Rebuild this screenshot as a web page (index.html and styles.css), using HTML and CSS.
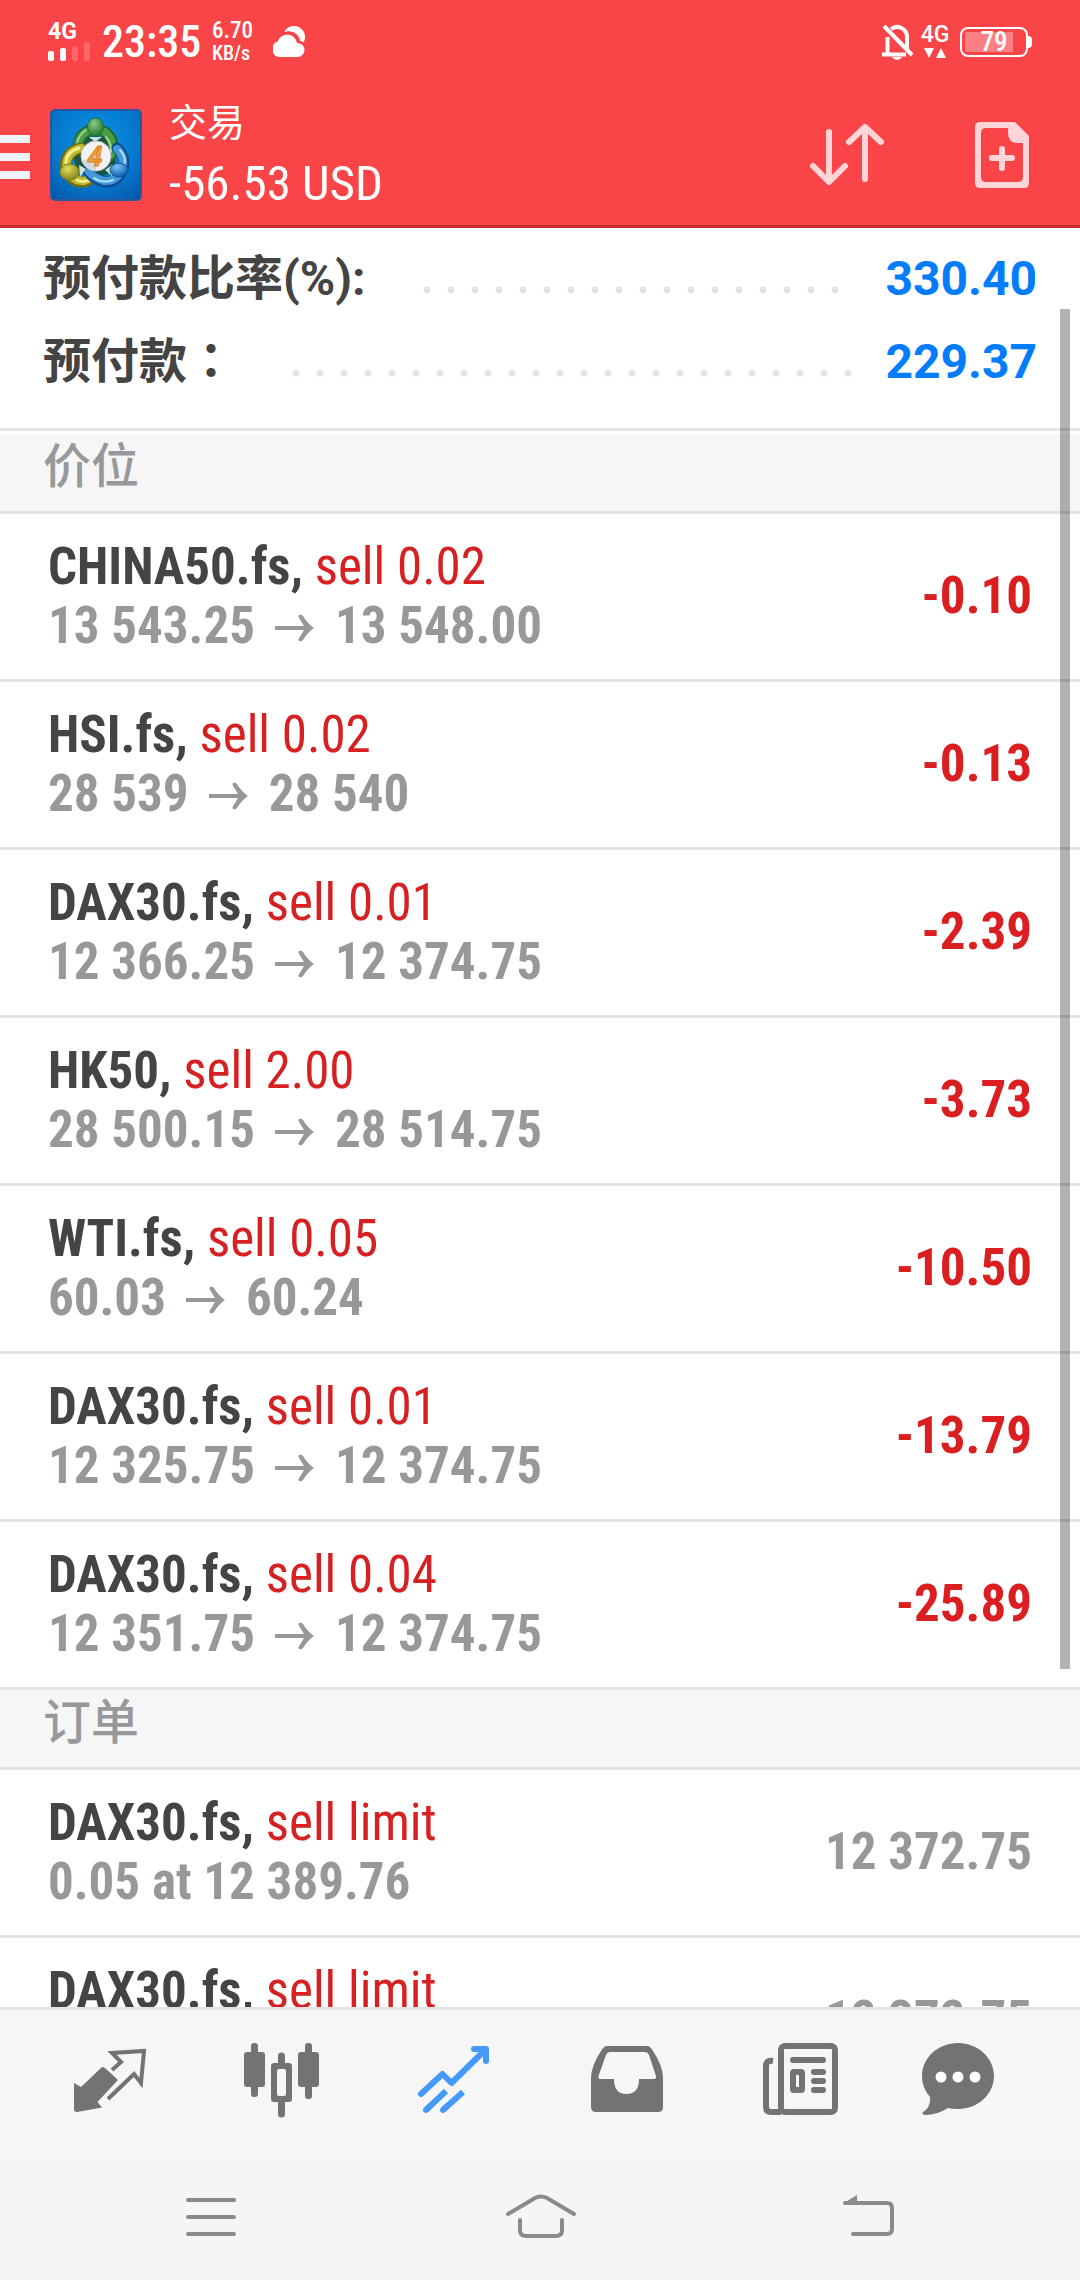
FILE: index.html
```
<!DOCTYPE html>
<html lang="zh-CN">
<head>
<meta charset="utf-8">
<meta name="viewport" content="width=device-width, initial-scale=1">
<title>交易</title>
<link rel="stylesheet" href="styles.css">
</head>
<body>
<header class="header">
  <div class="status">
    <div class="signal">
      <span class="net">4G</span>
      <svg width="44" height="20" viewBox="0 0 44 20" fill="#fff"><rect x="0" y="9" width="6" height="10" rx="2"/><rect x="12" y="6" width="6" height="13" rx="2"/><rect x="24" y="4" width="6" height="15" rx="2" opacity=".18"/><rect x="36" y="0" width="6" height="19" rx="2" opacity=".18"/></svg>
    </div>
    <span class="clock">23:35</span>
    <div class="speed"><span class="speed-value">6.70</span><span class="speed-unit">KB/s</span></div>
    <svg class="cloud" width="32" height="32" viewBox="0 0 32 32"><circle cx="21" cy="11" r="11" fill="#fff"/><path d="M8 31a8 8 0 0 1-6-14 8 8 0 0 1 4-3 10 10 0 0 1 18-1l1 4a7 7 0 0 1 0 14z" fill="#fff" stroke="#fa4548" stroke-width="5"/><path d="M8 31a8 8 0 0 1-6-14l3-2a10 10 0 0 1 18-1l1 3a7 7 0 0 1 1 14z" fill="#fff"/></svg>
    <span class="spacer"></span>
    <svg class="bell" width="32" height="38" viewBox="0 0 32 38" fill="none" stroke="#fff" stroke-width="4"><path d="M5.500 31V14M9 6a10 10 0 0 1 16 8v14M0 31.500h24M2 3l28 29"/><path d="M10 34h10q-2 3-5 3t-5-3z" fill="#fff" stroke="none"/></svg>
    <div class="data">
      <span class="net">4G</span>
      <svg width="22" height="12" viewBox="0 0 22 12" fill="#fff"><path d="M0 1h10L5 11zM12 11h10L17 1z"/></svg>
    </div>
    <div class="battery"><span class="battery-level">79</span></div>
  </div>
  <div class="appbar">
    <button class="menu" aria-label="菜单"><svg width="30" height="44" viewBox="0 0 30 44" fill="#eef3fb"><path d="M0 0h30v8H0zM0 18h30v8H0zM0 36h30v8H0z"/></svg></button>
    <svg class="logo" width="92" height="92" viewBox="0 0 92 92">
      <defs>
        <radialGradient id="sky" cx=".5" cy=".35" r=".8"><stop offset="0" stop-color="#0c96e4"/><stop offset=".6" stop-color="#0577cc"/><stop offset="1" stop-color="#0457a8"/></radialGradient>
        <radialGradient id="green" cx=".4" cy=".3" r=".7"><stop offset="0" stop-color="#8ccb80"/><stop offset="1" stop-color="#237a34"/></radialGradient>
        <radialGradient id="yellow" cx=".4" cy=".3" r=".7"><stop offset="0" stop-color="#e0dc5c"/><stop offset="1" stop-color="#84881c"/></radialGradient>
        <radialGradient id="blue" cx=".4" cy=".3" r=".7"><stop offset="0" stop-color="#7cc4f2"/><stop offset="1" stop-color="#0c5cae"/></radialGradient>
      </defs>
      <rect x="1" y="1" width="90" height="90" rx="4" fill="url(#sky)" stroke="#2c579e" stroke-width="2"/>
      <circle cx="45" cy="48" r="21" fill="#1d5545"/>
      <g fill="none" stroke-linecap="round">
        <path d="M30 42Q26 30 36 23Q45 17 55 23Q67 32 61 47" stroke="#1f652c" stroke-width="11"/>
        <path d="M29 41Q26 30 36 23Q45 18 55 23Q66 32 61 46" stroke="#4a9c45" stroke-width="8"/>
        <path d="M27 36Q28 26 36 21M56 28Q62 35 61 43" stroke="#a5d694" stroke-width="2"/>
        <path d="M31 39Q16 42 15 58Q20 74 34 73L42 70" stroke="#706f14" stroke-width="11"/>
        <path d="M31 39Q17 42 16 57Q21 73 34 72L41 69" stroke="#c0ba2e" stroke-width="8"/>
        <path d="M29 39Q16 43 16 54M27 71Q33 74 39 71" stroke="#f3ee8c" stroke-width="3"/>
        <path d="M67 39Q76 47 73 60Q67 74 54 73Q43 70 38 62" stroke="#0d4a8e" stroke-width="11"/>
        <path d="M67 40Q76 48 72 61Q66 73 54 72Q44 69 39 63" stroke="#4398d8" stroke-width="8"/>
        <path d="M70 41Q77 49 74 56M44 69Q53 75 63 71" stroke="#b3e0fa" stroke-width="2"/>
      </g>
      <path d="M45 33L39 28H52zM29 56l7 4-6 8zM62 56l-7 5 7 6z" fill="#c9e2d6"/>
      <ellipse cx="45.500" cy="18" rx="8" ry="9" fill="url(#green)" stroke="#246f31"/>
      <ellipse cx="19.500" cy="63" rx="9.500" ry="8" fill="url(#yellow)" stroke="#817f18"/>
      <ellipse cx="69" cy="61" rx="9" ry="7" fill="url(#blue)" stroke="#0e4f98"/>
      <circle cx="46" cy="47" r="15" fill="#f2f3f5" stroke="#bcc3c8"/>
      <path d="M32 51L46 49 46 61a14 14 0 0 1-14-10z" fill="#d4d7db"/>
      <text x="45" y="57" class="logo-digit">4</text>
    </svg>
    <div class="titles"><h1 class="title">交易</h1><span class="profit">-56.53 USD</span></div>
    <button class="sort" aria-label="排序"><svg width="80" height="72" viewBox="0 0 80 72" fill="none" stroke="#ffd5d8" stroke-width="6" stroke-linecap="round" stroke-linejoin="round"><path d="M22 13V62M6 47L22 63L38 47M58 60V9M42 23L58 8L74 23"/></svg></button>
    <button class="add" aria-label="新订单"><svg width="54" height="68" viewBox="0 0 54 68"><path fill="#ffd5d8" fill-rule="evenodd" d="M5 1H40L54 15V62Q54 67 49 67H5Q0 67 0 62V6Q0 1 5 1zM33 7H11Q6 7 6 12V56Q6 61 11 61H43Q48 61 48 56V22H43Q33 22 33 12z"/><path d="M27 28V47M17 37H37" stroke="#ffd5d8" stroke-width="6" stroke-linecap="round"/></svg></button>
  </div>
</header>

<main class="content">
  <dl class="summary">
    <div class="summary-row"><dt>预付款比率(%):</dt><dd><span class="dots"></span>330.40</dd></div>
    <div class="summary-row"><dt>预付款<span class="colon" lang="zh-TW">：</span></dt><dd><span class="dots"></span>229.37</dd></div>
  </dl>
  <h2 class="section section-first">价位</h2>
  <ul class="list">
    <li class="row"><div><p class="line"><b>CHINA50.fs,</b> <span class="side">sell 0.02</span></p><p class="line prices">13 543.25<svg class="arrow" viewBox="0 0 40 28"><use href="#arrow"/></svg>13 548.00</p></div><strong class="value loss">-0.10</strong></li>
    <li class="row"><div><p class="line"><b>HSI.fs,</b> <span class="side">sell 0.02</span></p><p class="line prices">28 539<svg class="arrow" viewBox="0 0 40 28"><use href="#arrow"/></svg>28 540</p></div><strong class="value loss">-0.13</strong></li>
    <li class="row"><div><p class="line"><b>DAX30.fs,</b> <span class="side">sell 0.01</span></p><p class="line prices">12 366.25<svg class="arrow" viewBox="0 0 40 28"><use href="#arrow"/></svg>12 374.75</p></div><strong class="value loss">-2.39</strong></li>
    <li class="row"><div><p class="line"><b>HK50,</b> <span class="side">sell 2.00</span></p><p class="line prices">28 500.15<svg class="arrow" viewBox="0 0 40 28"><use href="#arrow"/></svg>28 514.75</p></div><strong class="value loss">-3.73</strong></li>
    <li class="row"><div><p class="line"><b>WTI.fs,</b> <span class="side">sell 0.05</span></p><p class="line prices">60.03<svg class="arrow" viewBox="0 0 40 28"><use href="#arrow"/></svg>60.24</p></div><strong class="value loss">-10.50</strong></li>
    <li class="row"><div><p class="line"><b>DAX30.fs,</b> <span class="side">sell 0.01</span></p><p class="line prices">12 325.75<svg class="arrow" viewBox="0 0 40 28"><use href="#arrow"/></svg>12 374.75</p></div><strong class="value loss">-13.79</strong></li>
    <li class="row"><div><p class="line"><b>DAX30.fs,</b> <span class="side">sell 0.04</span></p><p class="line prices">12 351.75<svg class="arrow" viewBox="0 0 40 28"><use href="#arrow"/></svg>12 374.75</p></div><strong class="value loss">-25.89</strong></li>
  </ul>
  <h2 class="section">订单</h2>
  <ul class="list">
    <li class="row"><div><p class="line"><b>DAX30.fs,</b> <span class="side">sell limit</span></p><p class="line prices">0.05 at 12 389.76</p></div><strong class="value">12 372.75</strong></li>
    <li class="row"><div><p class="line"><b>DAX30.fs,</b> <span class="side">sell limit</span></p></div><strong class="value">12 372.75</strong></li>
  </ul>
  <div class="scrollbar"></div>
</main>

<nav class="tabs">
  <button aria-label="行情"><svg viewBox="0 0 96 96"><path fill="currentColor" d="M12 51L19 55L39 36Q41 34 43 36L55 47Q56 48 55 49L35.500 70L40 75.500L15 80Q12 80 12 77z"/><path d="M50 38L59 30L50 21L82 19L79 51L72 42L46 67" fill="none" stroke="currentColor" stroke-width="4"/></svg></button>
  <button aria-label="图表"><svg viewBox="0 0 96 96" fill="currentColor"><rect x="10" y="20" width="21" height="35" rx="3"/><rect x="17" y="11" width="7" height="54" rx="3"/><path fill-rule="evenodd" d="M40 31H55Q58 31 58 34V67Q58 70 55 70H40Q37 70 37 67V34Q37 31 40 31zM45 37Q43 37 43 39V62Q43 64 45 64H50Q52 64 52 62V39Q52 37 50 37z"/><path d="M44 32V24a3.500 3.500 0 0 1 7 0V32zM44 69V82a3.500 3.500 0 0 0 7 0V69z"/><rect x="64" y="20" width="21" height="35" rx="3"/><rect x="71" y="11" width="7" height="56" rx="3"/></svg></button>
  <button class="active" aria-label="交易" aria-current="page"><svg viewBox="0 0 96 96" fill="none" stroke="currentColor" stroke-width="6"><path stroke-linecap="round" stroke-linejoin="round" d="M15 62L36.500 42L45.500 51L79 18M68 17H80V29"/><path d="M40 59L20 78M57 60L37 78"/><path stroke-linecap="round" d="M20 78L24 74M37 78L41 74"/></svg></button>
  <button aria-label="历史"><svg viewBox="0 0 96 96"><path fill="currentColor" fill-rule="evenodd" d="M29 14H69Q72 14 75 19Q85 34 85 46V75Q85 80 80 80H18Q13 80 13 75V46Q13 34 23 19Q26 14 29 14zM33 20Q29 20 28 23L20.500 44Q20 47 22 47H36Q36 62 48.500 62Q61 62 61 47H76Q78.500 47 78 44L71 23Q70 20 66 20z"/></svg></button>
  <button aria-label="新闻"><svg viewBox="0 0 96 96" fill="none" stroke="currentColor" stroke-width="6"><rect x="31" y="14" width="54" height="66" rx="4"/><path d="M23 29Q16 28 16 34V75Q16 80 21 80H31"/><path stroke-linecap="round" d="M43 28H73M64 40H73M64 49H73M64 58H73"/><rect x="43" y="40" width="9" height="18" rx="1"/></svg></button>
  <button aria-label="消息"><svg viewBox="0 0 96 96"><path fill="currentColor" d="M36 11C56 11 72 26 72 44S56 77 36 77Q30 77 26 76Q15 83 3 83Q-1 82 1 80Q9 75 8 65Q0 56 0 44C0 26 16 11 36 11z"/><g fill="#fff"><circle cx="19" cy="45" r="5.500"/><circle cx="36" cy="45" r="5.500"/><circle cx="53" cy="45" r="5.500"/></g></svg></button>
</nav>
<nav class="system">
  <button aria-label="最近任务"><svg viewBox="0 0 80 56"><path d="M17 11H63M17 28H63M17 45H63"/></svg></button>
  <button aria-label="主屏幕"><svg viewBox="0 0 80 56"><path d="M8 25L35 9Q41 6 47 9L74 25M20 31V41Q20 47 26 47H56Q62 47 62 41V31"/></svg></button>
  <button aria-label="返回"><svg viewBox="0 0 80 56"><path d="M16 14H58Q63 14 63 19V40Q63 45 58 45H24"/><path d="M15 14L28 6V14z" fill="#8a8a8a" stroke="none"/></svg></button>
</nav>

<svg width="0" height="0" class="defs"><symbol id="arrow" viewBox="0 0 40 28"><path d="M0 14H32" stroke="#96999b" stroke-width="4"/><path d="M24 1Q26 0 28 2Q33 10 39 14Q33 18 28 26Q26 28 24 27Q23 26 24 24Q28 18 30 14Q28 10 24 4Q23 2 24 1z" fill="#96999b"/></symbol></svg>
</body>
</html>
```
FILE: styles.css
```
* { box-sizing: border-box; margin: 0; padding: 0; }

body {
  display: flex;
  flex-direction: column;
  height: 100vh;
  overflow: hidden;
  background: #fff;
  font-family: Roboto, "Noto Sans CJK SC", sans-serif;
  color: #444;
}

button { border: 0; background: none; cursor: pointer; }
svg { display: block; flex: none; }
.defs { position: absolute; }

/* Header */
.header {
  flex: none;
  background: #fa4548;
  border-bottom: 3px solid #c62a2c;
  color: #fff;
}
.status {
  display: flex;
  align-items: center;
  height: 84px;
  padding: 0 52px 0 48px;
}
.signal { display: flex; flex-direction: column; width: 54px; }
.net { font-size: 23px; line-height: 20px; font-weight: 700; }
.clock {
  font-family: "Roboto Condensed", sans-serif;
  font-size: 44px;
  font-weight: 500;
  width: 110px;
  line-height: 84px;
}
.speed { display: flex; flex-direction: column; width: 61px; font-family: "Roboto Condensed", sans-serif; }
.speed-value { font-size: 23px; line-height: 22px; font-weight: 500; }
.speed-unit { font-size: 20px; line-height: 22px; font-weight: 500; }
.spacer { flex: 1; }
.bell { margin-right: 7px; }
.data { display: flex; flex-direction: column; align-items: center; width: 28px; margin-right: 11px; gap: 2px; }
.data .net { font-weight: 500; }
.battery {
  position: relative;
  width: 68px;
  height: 30px;
  border: 2px solid #fff;
  border-radius: 8px;
  background: linear-gradient(#fa8084, #fa8084) 3px 3px / 48px 20px no-repeat;
  text-align: center;
}
.battery::after {
  content: "";
  position: absolute;
  right: -6px;
  top: 7px;
  width: 4px;
  height: 12px;
  border-radius: 0 4px 4px 0;
  background: #fff;
}
.battery-level { display: block; font: 500 27px/26px "Roboto Condensed", sans-serif; }

.appbar { display: flex; align-items: center; height: 141px; padding-right: 51px; }
.menu { width: 50px; padding-top: 4px; }
.logo-digit { font: italic 700 27px Roboto, sans-serif; fill: #f6a43a; stroke: #d9822b; stroke-width: 1px; text-anchor: middle; }
.titles { flex: 1; display: flex; flex-direction: column; padding: 8px 0 0 27px; }
.title { font-size: 38px; line-height: 50px; font-weight: 400; }
.profit { font: 400 49px/72px "Roboto Condensed", sans-serif; }
.add { margin-left: 88px; }

/* Content */
.content { position: relative; flex: 1; min-height: 0; overflow: hidden; }
.summary { padding: 9px 43px 25px; border-bottom: 3px solid #e3e3e3; }
.summary-row { display: flex; height: 83px; font-size: 48px; line-height: 83px; font-weight: 700; }
.summary-row dd { flex: 1; display: flex; justify-content: space-between; gap: 24px; margin-left: 49px; color: #057dfa; }
.colon { font-family: "Noto Sans CJK TC", sans-serif; line-height: 48px; }
.dots {
  width: round(down, 100% - 176px, 24px);
  height: 24px;
  margin-top: 41px;
  background: radial-gradient(circle, #e3e3e3 3px, transparent 4px) 0 0 / 24px 24px repeat-x;
}

.section {
  height: 80px;
  padding: 0 43px;
  background: #f6f6f6;
  border-bottom: 3px solid #e3e3e3;
  color: #96999b;
  font-size: 48px;
  line-height: 66px;
  font-weight: 500;
}
.section-first { margin-top: 3px; }

.list { list-style: none; }
.row {
  display: flex;
  align-items: flex-start;
  justify-content: space-between;
  height: 168px;
  padding: 23px 48px;
  border-bottom: 3px solid #e3e3e3;
  font-family: "Roboto Condensed", sans-serif;
}
.line { font-size: 51px; line-height: 59px; }
.side { color: #d62021; }
.prices { display: flex; align-items: center; color: #96999b; font-weight: 700; }
.arrow { width: 40px; height: 28px; margin: 4px 20px 0; }
.value { color: #96999b; font-size: 51px; line-height: 118px; font-weight: 700; }
.loss { color: #db1f21; }

.scrollbar {
  position: absolute;
  top: 81px;
  right: 10px;
  width: 10px;
  height: 1360px;
  background: rgba(0, 0, 0, .3);
}

/* Bottom navigation */
.tabs {
  flex: none;
  display: grid;
  grid-template-columns: repeat(6, 1fr);
  height: 154px;
  padding: 22px 24px 0;
  border-top: 3px solid #e3e3e3;
  background: #f6f6f6;
}
.tabs button { display: flex; justify-content: center; color: #737373; }
.tabs svg { width: 96px; height: 96px; }
.tabs .active { color: #4599f8; }

.system {
  flex: none;
  display: grid;
  grid-template-columns: repeat(3, 1fr);
  height: 119px;
  padding: 28px 46px 0;
  background: #f5f5f5;
}
.system button { display: flex; justify-content: center; }
.system svg { width: 80px; height: 56px; fill: none; stroke: #8a8a8a; stroke-width: 4; stroke-linecap: round; }
```
